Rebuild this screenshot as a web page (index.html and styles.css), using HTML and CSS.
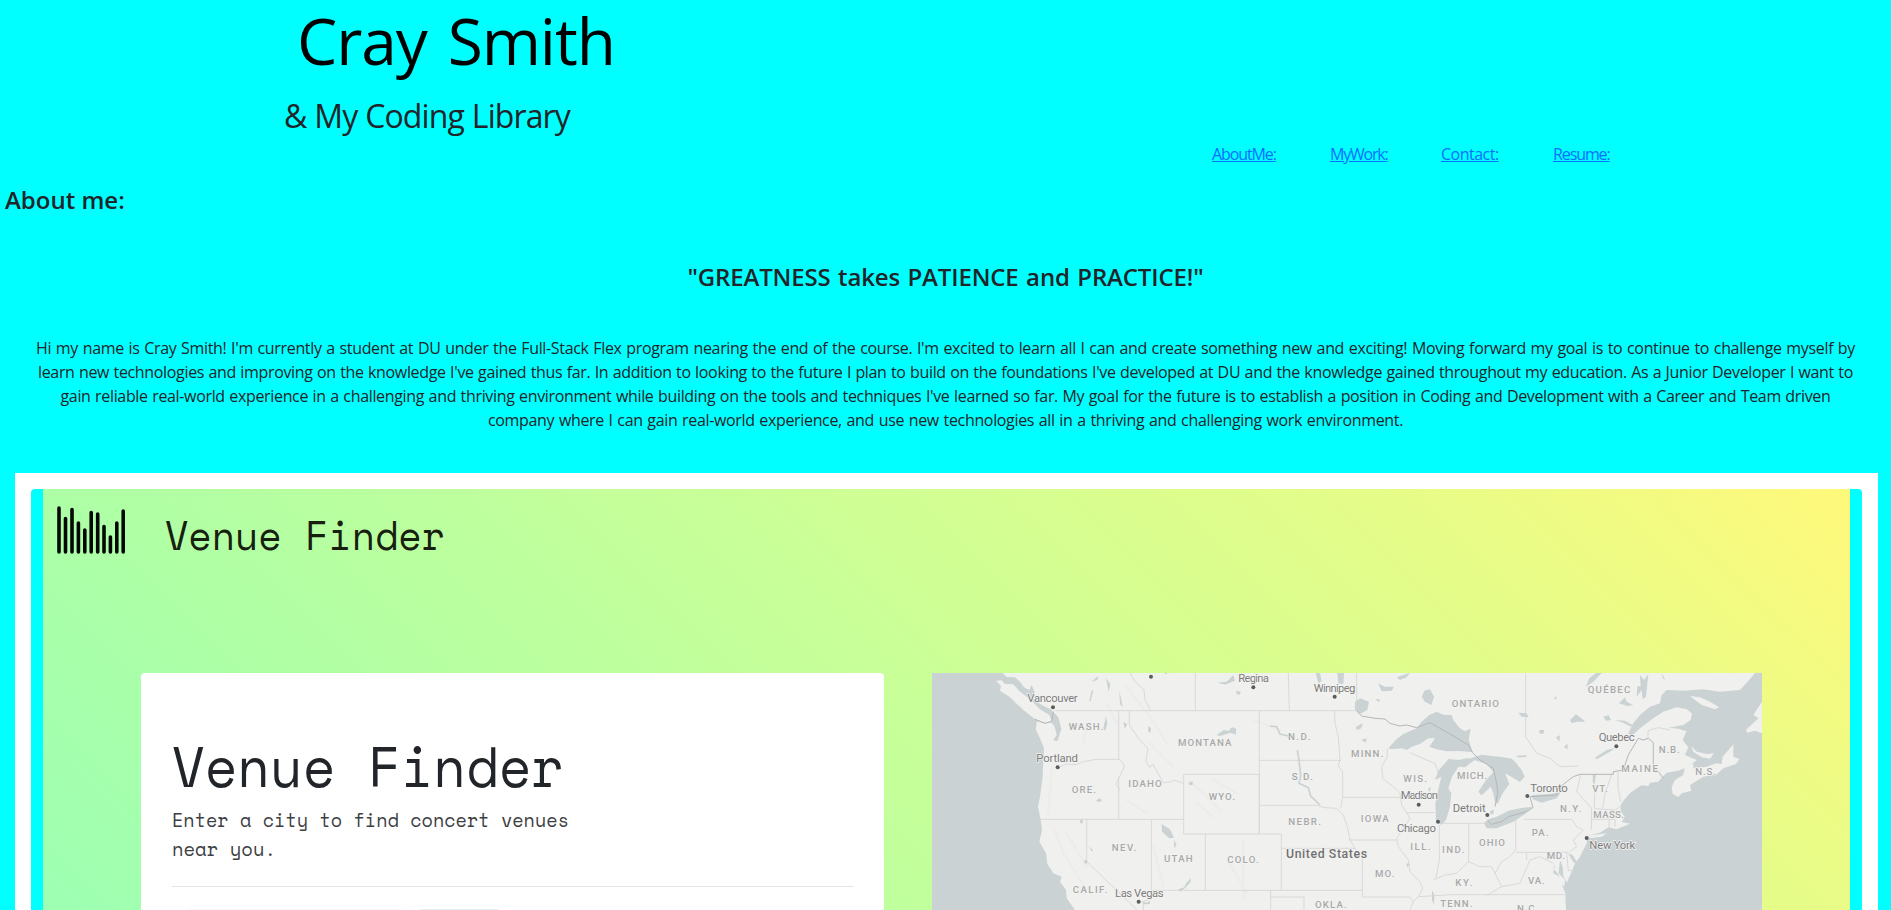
FILE: index.html
```html
<!DOCTYPE html>
<html lang="en">
<head>
<meta charset="utf-8">
<title>Cray Smith</title>
<link rel="stylesheet" href="styles.css">
</head>
<body>
<header class="header">
  <h1 class="name">Cray Smith</h1>
  <h2 class="tagline">&amp; My Coding Library</h2>
  <nav class="nav">
    <a class="n1" href="#about">AboutMe:</a>
    <a class="n2" href="#work">MyWork:</a>
    <a class="n3" href="#contact">Contact:</a>
    <a class="n4" href="#resume">Resume:</a>
  </nav>
</header>
<section class="about" id="about">
  <h3 class="about-title">About me:</h3>
  <h3 class="quote">"GREATNESS takes PATIENCE and PRACTICE!"</h3>
  <p class="bio">
    <span class="l1">Hi my name is Cray Smith! I'm currently a student at DU under the Full-Stack Flex program nearing the end of the course. I'm excited to learn all I can and create something new and exciting! Moving forward my goal is to continue to challenge myself by</span>
    <span class="l2">learn new technologies and improving on the knowledge I've gained thus far. In addition to looking to the future I plan to build on the foundations I've developed at DU and the knowledge gained throughout my education. As a Junior Developer I want to</span>
    <span class="l3">gain reliable real-world experience in a challenging and thriving environment while building on the tools and techniques I've learned so far. My goal for the future is to establish a position in Coding and Development with a Career and Team driven</span>
    <span class="l4">company where I can gain real-world experience, and use new technologies all in a thriving and challenging work environment.</span>
  </p>
</section>
<section class="work" id="work">
  <div class="thumb">
    <svg class="shot" viewBox="43 489 1807 421" width="1807" height="421">
      <defs>
        <linearGradient id="bg" gradientUnits="userSpaceOnUse" x1="43" y1="910" x2="1157" y2="-204">
          <stop offset="0" stop-color="#9dffb3"/><stop offset=".19" stop-color="#adffa6"/><stop offset=".48" stop-color="#c8ff98"/><stop offset=".81" stop-color="#e8fc87"/><stop offset="1" stop-color="#fff97b"/>
        </linearGradient>
        <clipPath id="mapclip"><rect x="932" y="673" width="830" height="237"/></clipPath>
      </defs>
      <rect x="43" y="489" width="1807" height="421" fill="url(#bg)"/>
      <path class="bars" d="M59 508V552M65.5 518.5V552M72 509.5V552M78.4 523V552M84.8 530V552M91.2 512.5V552M97.7 514V552M104 526.5V552M110.4 537V552M116.8 523V552M123.2 511V552"/>
      <text class="mono" x="165" y="550" font-size="41" fill="#17200f" textLength="280" lengthAdjust="spacingAndGlyphs">Venue Finder</text>
      <path d="M141 910V677a4 4 0 0 1 4-4H880a4 4 0 0 1 4 4V910Z" fill="#fff"/>
      <text class="mono" x="172" y="787" font-size="57" fill="#212529" textLength="392" lengthAdjust="spacingAndGlyphs">Venue Finder</text>
      <text class="mono" x="172" y="827" font-size="19.5" fill="#3d4043" textLength="397" lengthAdjust="spacingAndGlyphs">Enter a city to find concert venues</text>
      <text class="mono" x="172" y="855.5" font-size="19.5" fill="#3d4043" textLength="104" lengthAdjust="spacingAndGlyphs">near you.</text>
      <path d="M172 886.5H854" stroke="#e4e5e6"/>
      <path d="M189 909.5H401" stroke="#f8f9fa"/><path d="M420 909.5H498" stroke="#e6f0f8"/>
      <g clip-path="url(#mapclip)">
        <rect x="932" y="673" width="830" height="237" fill="#f0f0ef"/>
        <g transform="translate(920 660) scale(.33333)">
          <g class="relief">
            <path d="M395 330L385 460M400 500L430 580 500 690M440 520L500 620M560 130L590 190M620 80L690 170 740 250M690 250L760 320M820 370L900 450M830 430L880 470M880 360L950 400M700 560L730 680M930 610L980 700M970 540V720M500 200L490 250M620 420L680 460M1000 180L1080 210"/>
          </g>
          <g class="water">
            <path d="M36 39H248L260 51 285 52 300 65 312 82 327 90 335 75 345 98 340 117 365 135 392 148 415 172 424 207 412 244 400 240 410 225 404 200 393 186 374 190 350 184 348 210 360 235 372 265 370 300 368 350 360 410 354 440 362 478 366 510 358 545 378 580 382 612 400 640 425 650 420 665 438 690 440 715 465 750H36Z"/>
            <path d="M514 94L520 90 512 124 508 122ZM558 55L571 72 566 96 561 70ZM598 95L602 110 608 141 600 132ZM515 65L535 47 532 60ZM686 197L693 205 691 219 684 213ZM610 185L622 193 614 206ZM558 168L562 190 556 213 550 205ZM890 225L912 210 925 213 940 200 948 223 930 218 900 228ZM892 68L920 65 940 45 945 62 915 74ZM725 492L737 500 750 508 762 533 748 535 726 515ZM762 540L770 555 763 565ZM480 480L488 476 488 490 481 490ZM492 602L500 597 503 608 495 612ZM507 558L520 572 514 574ZM528 421L540 415 546 424 535 426ZM805 368L818 364 818 376 808 375ZM775 688L793 682 798 671 812 654 812 665 798 682 780 696ZM665 724L680 728 690 722 690 732 670 733Z"/>
            <g transform="translate(930 0)">
              <path d="M475 265L500 237 520 222 560 205 575 185 598 165 620 155 640 164 665 165 670 180 690 205 704 214 722 206 716 240 728 277 690 273 650 274 620 268 598 260 615 235 595 235 570 252 545 260 530 270 515 265 485 268Z"/>
              <path d="M686 300L710 295 735 299 705 322 686 320 666 350 655 385 664 400 660 440 648 480 634 495 618 482 616 430 626 385 634 350 615 360 626 330 645 310 655 297Z"/>
              <path d="M717 296L755 284 820 292 845 296 855 305 875 330 884 350 870 366 840 348 825 340 838 372 818 400 803 432 795 425 790 400 782 380 755 406 745 395 768 360 790 337 770 312 740 302Z"/>
              <path d="M762 490L775 478 800 470 835 452 870 445 907 440 885 462 850 485 800 505 770 505ZM780 452L792 450 790 463 781 463Z"/>
              <path d="M375 125L390 115 417 125 412 150 390 162 375 150ZM583 92L600 88 612 110 604 135 584 125 575 110ZM444 70L465 80 492 80 485 92 455 94ZM378 200L398 190 394 205 380 210ZM394 240L410 234 407 248ZM436 118L450 118 447 127ZM500 52L540 38 530 52 510 60ZM257 39H270L275 64 265 70ZM322 39H342L340 72 325 70ZM18 92L32 96 30 104 20 102ZM0 205L18 205 18 225 6 215ZM595 385L603 382 598 400ZM528 610L540 612 532 622ZM606 690L613 705 612 735 606 720Z"/>
            </g>
            <g transform="translate(1740 0)">
              <path d="M765 39L742 66 720 90 660 95 610 88 550 92 500 90 485 105 480 130 450 140 420 165 400 190 385 220 395 228 420 205 460 175 490 155 530 142 560 148 576 160 572 180 550 195 505 203 535 206 560 214 548 240 565 262 555 285 590 300 570 318 535 332 500 338 488 350 475 365 450 368 445 378 425 376 408 386 390 400 372 420 362 435 362 452 374 470 365 486 390 491 350 508 325 502 300 518 262 528 260 550 240 590 224 612 212 642 200 668 190 648 188 620 180 600 176 640 195 660 193 680 185 672 196 700 198 750H786V39Z"/>
              <path d="M95 405L150 402 184 396 170 415 145 422 125 428 98 418ZM285 293L320 270 345 264 330 275 290 298ZM345 180L375 182 398 195 394 200 365 187ZM257 80L268 55 288 39H305L280 65ZM420 45L432 60 445 42 438 110 428 118 425 90 410 110 412 78 422 80ZM485 39L496 60 488 55ZM210 180L228 163 240 172 256 185 230 185 215 190ZM357 130L375 112 380 125 400 136 380 138 365 132ZM310 170L326 166 333 180 318 182ZM118 210L133 210 130 222 118 220ZM168 232L180 226 178 245ZM192 262L202 250 203 268ZM48 287L82 286 75 292 55 292ZM55 158L80 160 86 172 65 170ZM162 115L170 108 168 120ZM278 344L288 342 284 375 278 365ZM205 582L222 610 230 605 218 585ZM165 610L160 640 180 650 160 625Z"/>
            </g>
          </g>
          <g class="land">
            <path d="M228 62L245 61 255 72 280 73 300 95 330 118 360 148 388 165 395 182 375 188 345 178 310 150 270 112 240 92 243 78Z"/>
            <path transform="translate(1740 0)" d="M515 380L525 360 550 345 555 320 580 312 580 325 620 320 648 310 665 312 668 290 700 253 700 290 718 297 708 312 670 325 650 343 610 350 570 375 574 392 545 400 535 411 518 402ZM574 258L590 275 620 282 642 280 630 296 605 292 580 275ZM570 108L600 112 630 125 657 142 645 148 605 135ZM786 125L760 165 775 175 738 210 742 218 765 212 786 220ZM262 527L320 520 305 530 270 535Z"/>
          </g>
          <g class="lines">
            <path d="M405 152H1310M826 39V152M596 152V298M596 350V478M362 478H791M500 478V605L650 748M694 478V715L670 725V750M791 343H1018V522H791ZM856 522V691M694 691H1328M628 152V195L655 235 683 265 678 305 690 322 698 312 730 368 755 365 760 360 791 370M420 320L440 312 470 314 490 305 530 298H600L614 318 588 372 600 390M630 39L645 65 672 90 675 120 692 152M1018 522H1084V691M1018 152V522M1018 301H1263M1018 436H1190L1215 443 1250 445 1270 465 1282 500 1290 540 1308 570 1327 590V710M1084 565H1305M1105 39L1108 152M1310 39V150M1244 152L1245 190 1255 230 1260 300 1255 318 1268 335V412L1262 445M1268 412H1440M1288 540H1430M1052 691V750M1052 711H1152V750M1327 711H1470L1480 725 1470 750"/>
            <path d="M1402 265V290L1385 320 1388 355 1420 380 1440 400 1445 435 1460 458 1470 475 1430 535 1435 560 1465 600 1470 635 1500 665 1508 685 1495 710 1480 725M1460 458H1545M1470 278L1520 300 1545 310 1555 340M1558 495V600L1548 655M1558 490H1700M1646 492V605M1540 660L1575 645 1610 640 1645 605 1680 620 1715 620 1725 640 1745 605 1770 590 1787 570V480M1495 710L1600 704H1940M1725 640L1745 680 1700 706M1787 577H1945L1955 590M1810 478H1955L1970 500 1990 510 1960 540 1970 560 1950 575M1745 680L1800 670 1830 600 1860 590 1900 610M1940 577L1945 632H1962M1820 577V600"/>
            <path transform="translate(1740 0)" d="M77 39V230L110 280 150 295 180 320 235 318M242 345L230 395 275 445 274 510M285 375L283 445M335 345L315 400 308 445M354 335V380L362 425M283 446L345 450 362 440M275 478H345V500M328 478V505M444 235V212L475 203 510 210"/>
          </g>
          <g class="border">
            <path d="M345 178L375 190 395 185 400 155M1310 152L1325 168 1365 175 1395 177 1410 190 1440 198 1460 195 1490 203 1530 188 1590 222 1645 255 1658 278 1680 300 1720 325 1730 370 1733 400 1725 440M1702 480L1715 493 1745 485 1765 470 1820 455 1839 443 1830 410 1910 405 1915 385 1940 365 1960 350 1980 343H2080V335L2110 330 2125 285 2155 235 2170 240 2185 235 2200 248V325L2215 335 2230 355"/>
            <path class="river" d="M1132 270L1137 300 1142 345 1137 370 1165 383 1172 408 1200 435M1050 198L1070 200 1080 222 1105 228"/>
          </g>
          <g class="dots"><circle cx="693" cy="50" r="6"/><circle cx="399" cy="142" r="6"/><circle cx="413" cy="322" r="6"/><circle cx="656" cy="725" r="6"/><circle cx="1000" cy="82" r="6"/><circle cx="1244" cy="110" r="6"/><circle cx="1496" cy="434" r="6"/><circle cx="1554" cy="485" r="6"/><circle cx="1702" cy="465" r="6"/><circle cx="1822" cy="408" r="6"/><circle cx="2089" cy="259" r="6"/><circle cx="2000" cy="534" r="6"/></g>
          <path d="M736 39L740 39 736 42Z" fill="#828282"/>
          <g class="city">
            <text x="322" y="126" textLength="151">Vancouver</text><text x="349" y="305" textLength="125">Portland</text><text x="585" y="710" textLength="146">Las Vegas</text>
            <text x="955" y="66" textLength="92">Regina</text><text x="1181" y="96" textLength="125">Winnipeg</text><text x="1442" y="418" textLength="112">Madison</text><text x="1431" y="517" textLength="117">Chicago</text><text x="1598" y="455" textLength="99">Detroit</text><text x="1831" y="397" textLength="112">Toronto</text><text x="2036" y="243" textLength="108">Quebec</text><text x="2008" y="567" textLength="138">New York</text>
          </g>
          <text class="country" x="1098" y="594" textLength="243">United States</text>
          <g class="state">
            <text x="446" y="211" textLength="104">WASH.</text><text x="455" y="398" textLength="73">ORE.</text><text x="625" y="382" textLength="100">IDAHO</text><text x="774" y="257" textLength="160">MONTANA</text><text x="866" y="420" textLength="79">WYO.</text><text x="575" y="572" textLength="74">NEV.</text><text x="732" y="606" textLength="86">UTAH</text><text x="922" y="609" textLength="94">COLO.</text><text x="458" y="698" textLength="104">CALIF.</text>
            <text x="1104" y="239" textLength="67">N.D.</text><text x="1115" y="360" textLength="64">S.D.</text><text x="1105" y="495" textLength="98">NEBR.</text><text x="1293" y="290" textLength="97">MINN.</text><text x="1450" y="366" textLength="71">WIS.</text><text x="1611" y="357" textLength="90">MICH.</text><text x="1322" y="485" textLength="84">IOWA</text><text x="1471" y="570" textLength="61">ILL.</text><text x="1566" y="579" textLength="67">IND.</text><text x="1677" y="558" textLength="78">OHIO</text><text x="1365" y="651" textLength="58">MO.</text><text x="1606" y="678" textLength="51">KY.</text><text x="1561" y="741" textLength="96">TENN.</text><text x="1185" y="744" textLength="95">OKLA.</text><text x="1595" y="140" textLength="142">ONTARIO</text>
            <text x="2003" y="99" textLength="128">QUÉBEC</text><text x="2216" y="278" textLength="63">N.B.</text><text x="2104" y="336" textLength="110">MAINE</text><text x="2326" y="345" textLength="62">N.S.</text><text x="2017" y="397" textLength="46">VT.</text><text x="1920" y="456" textLength="64">N.Y.</text><text x="2020" y="475" textLength="92">MASS.</text><text x="1835" y="529" textLength="51">PA.</text><text x="1880" y="598" textLength="55">MD.</text><text x="1824" y="672" textLength="50">VA.</text><text x="1791" y="755" textLength="63">N.C.</text>
          </g>
        </g>
      </g>
    </svg>
  </div>
</section>
</body>
</html>
```
FILE: styles.css
```css
* { box-sizing: border-box; }
body {
  margin: 0;
  height: 910px;
  overflow: hidden;
  background: #00ffff;
  color: #212529;
  font: 16px/24px "Trebuchet MS", "Open Sans", "Noto Sans", sans-serif;
}
h1, h2, h3, p { margin: 0; font-weight: 400; }
.header { height: 171px; }
.name {
  height: 85px;
  padding-left: 297px;
  color: #000;
  font-size: 64px;
  line-height: 82px;
  letter-spacing: -1.1px;
  word-spacing: 5.5px;
}
.tagline {
  height: 56px;
  padding: 10px 0 0 284px;
  font-size: 32px;
  line-height: 42px;
  letter-spacing: -0.9px;
  word-spacing: 0.5px;
}
.nav { display: flex; padding: 1px 0 0 1212px; }
.nav a {
  color: #0d6efd;
  text-decoration: underline;
  white-space: nowrap;
}
.n1, .n2, .n3 { display: block; }
.n1 { width: 118px; letter-spacing: -1.1px; }
.n2 { width: 111px; letter-spacing: -1.2px; }
.n3 { width: 112px; letter-spacing: -0.5px; }
.n4 { letter-spacing: -1.1px; }
.about-title, .quote { font-size: 24px; line-height: 30px; font-weight: 600; }
.about-title { padding: 14px 0 0 5px; height: 91px; letter-spacing: 0; }
.quote { width: 516px; height: 74px; margin: 0 auto; white-space: nowrap; letter-spacing: -0.15px; text-align-last: justify; }
.bio { display: grid; justify-items: center; }
.bio span { white-space: nowrap; letter-spacing: -0.34px; text-align-last: justify; }
.l1 { width: 1819px; }
.l2 { width: 1815px; }
.l3 { width: 1770px; }
.l4 { width: 915px; }
.work { width: 1863px; height: 437px; margin: 41px 0 0 15px; padding: 16px 16px 0; background: #fff; }
.thumb { height: 421px; padding: 0 12px; border-radius: 4px 4px 0 0; background: #00ffff; }
.shot { display: block; }
.bars { fill: none; stroke: #050805; stroke-width: 3.6; stroke-linecap: round; }
.mono { font-family: "Space Mono", "Liberation Mono", monospace; }
.water { fill: #cad2d3; }
.land { fill: #f0f0ef; }
.relief { fill: none; stroke: #ececeb; stroke-width: 7; stroke-linecap: round; }
.lines { fill: none; stroke: #d5d5d5; stroke-width: 2.6; }
.border { fill: none; stroke: #b4b7b8; stroke-width: 3; }
.river { stroke: #cad2d3; stroke-width: 5; }
.dots { fill: #5c5c5c; }
.city, .country, .state { font-family: Roboto, sans-serif; stroke: #f3f3f2; stroke-width: 4; paint-order: stroke; }
.city { font-size: 34px; fill: #7c7c7c; }
.country { font-size: 37px; font-weight: 500; fill: #707070; }
.state { font-size: 29px; font-weight: 500; fill: #a8a8a8; }
```
